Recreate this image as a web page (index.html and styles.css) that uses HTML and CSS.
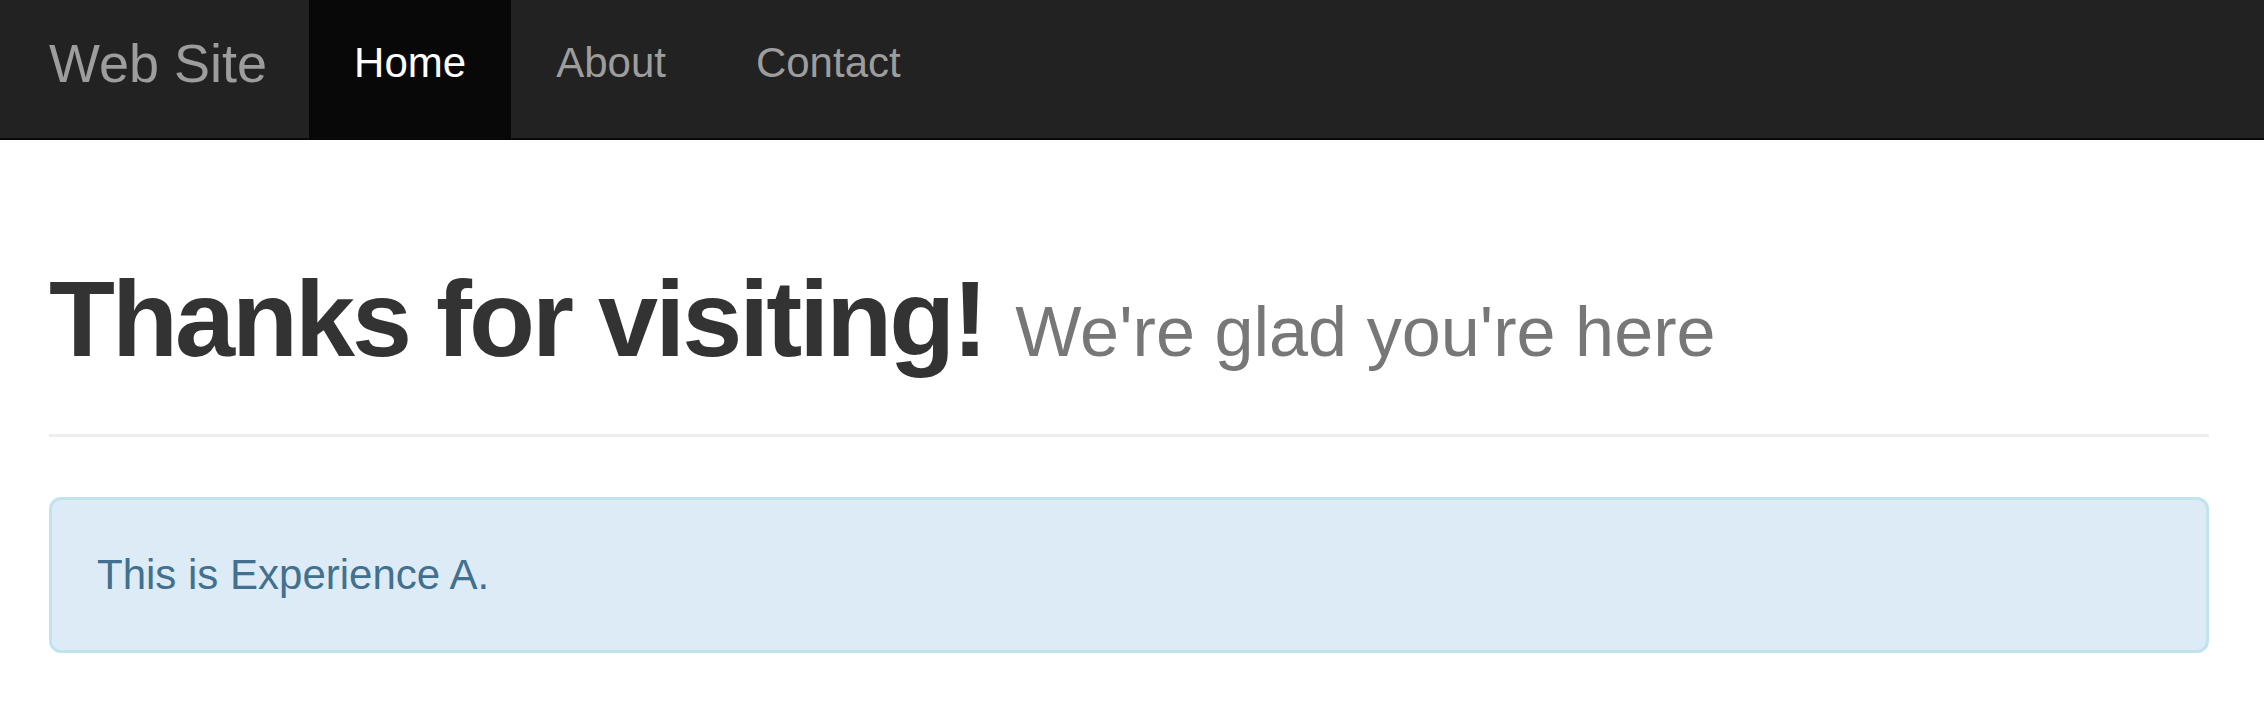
FILE: index.html
```html
<!DOCTYPE html>
<html lang="en">
<head>
<meta charset="utf-8">
<title>Web Site</title>
<link rel="stylesheet" href="styles.css">
</head>
<body>
<nav class="navbar">
  <a class="brand" href="#">Web Site</a>
  <ul class="nav">
    <li class="nav-item active"><a href="#">Home</a></li>
    <li class="nav-item"><a href="#">About</a></li>
    <li class="nav-item"><a href="#">Contact</a></li>
  </ul>
</nav>
<main class="container">
  <div class="page-header">
    <h1 class="title"><span class="title-main">Thanks for visiting!</span> <small class="subtitle">We're glad you're here</small></h1>
  </div>
  <div class="alert">This is Experience A.</div>
</main>
</body>
</html>
```

FILE: styles.css
```css
* { box-sizing: border-box; }
html, body { margin: 0; padding: 0; }
body {
  font-family: "Liberation Sans", Arial, Helvetica, sans-serif;
  font-size: 42px;
  line-height: 60px;
  color: #333;
  background: #fff;
}
a { text-decoration: none; }

.navbar {
  display: flex;
  align-items: stretch;
  height: 140px;
  background: #222;
  border-bottom: 2px solid #080808;
}
.brand {
  display: block;
  padding: 33px 42px 45px 49px;
  font-size: 54px;
  line-height: 60px;
  color: #9d9d9d;
}
.nav {
  display: flex;
  margin: 0;
  padding: 0;
  list-style: none;
}
.nav-item a {
  display: block;
  height: 138px;
  padding: 33px 45px 45px;
  font-size: 42px;
  line-height: 60px;
  color: #9d9d9d;
}
.nav-item.active a {
  color: #fff;
  background: #080808;
}

.container {
  padding: 0 55px 0 49px;
}
.page-header {
  margin: 120px 0 60px;
  padding-bottom: 25px;
  border-bottom: 3px solid #eee;
}
.title {
  margin: 0 0 30px;
  font-size: 108px;
  line-height: 118.8px;
  font-weight: bold;
  color: #333;
}
.title-main {
  letter-spacing: -3px;
}
.subtitle {
  font-size: 70.2px;
  font-weight: normal;
  line-height: 1;
  color: #777;
  letter-spacing: 0;
}
.alert {
  padding: 45px;
  border: 3px solid #c1e3ee;
  border-radius: 12px;
  background: #ddebf6;
  color: #42708f;
  font-size: 42px;
  line-height: 60px;
}
```
